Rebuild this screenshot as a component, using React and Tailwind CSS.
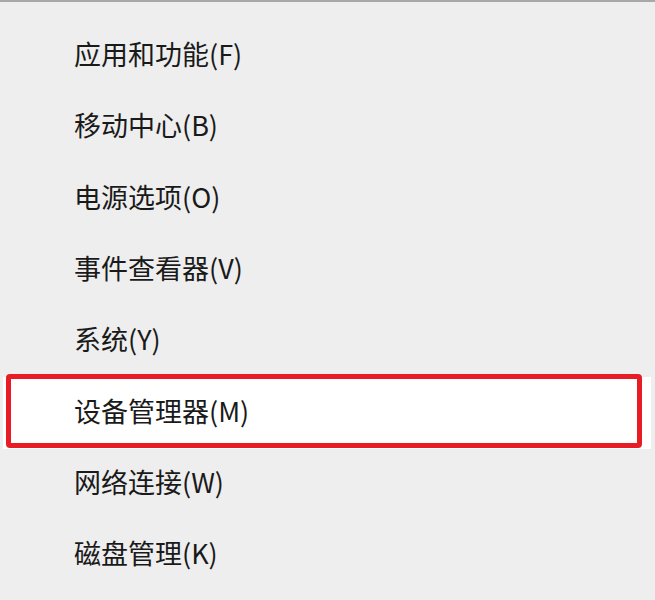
export default function App() {
  const items = [
    "应用和功能(F)",
    "移动中心(B)",
    "电源选项(O)",
    "事件查看器(V)",
    "系统(Y)",
    "设备管理器(M)",
    "网络连接(W)",
    "磁盘管理(K)",
  ];
  return (
    <div
      className="w-[655px] h-[600px] bg-[#eeeeee] overflow-hidden flex flex-col border-t-2 border-[#a8a8a8] pt-[19px]"
      style={{ fontFamily: '"Noto Sans CJK SC", "Noto Sans", sans-serif' }}
    >
      {items.map((t, i) =>
        i === 5 ? (
          <div key={t} className="relative h-[71.3px] shrink-0 bg-white ml-[3px] mr-[4px] flex items-center pl-[71px] pb-[6px]">
            <span className="text-[27px] leading-none text-[#1a1a1a]">{t}</span>
            <div className="absolute left-[3px] right-[9px] top-[-3px] bottom-[1px] border-[5px] border-[#e81c24] rounded-[4px]" />
          </div>
        ) : (
          <div key={t} className="h-[71.3px] shrink-0 flex items-center pl-[74px] pb-[6px]">
            <span className="text-[27px] leading-none text-[#1a1a1a]">{t}</span>
          </div>
        )
      )}
    </div>
  );
}
